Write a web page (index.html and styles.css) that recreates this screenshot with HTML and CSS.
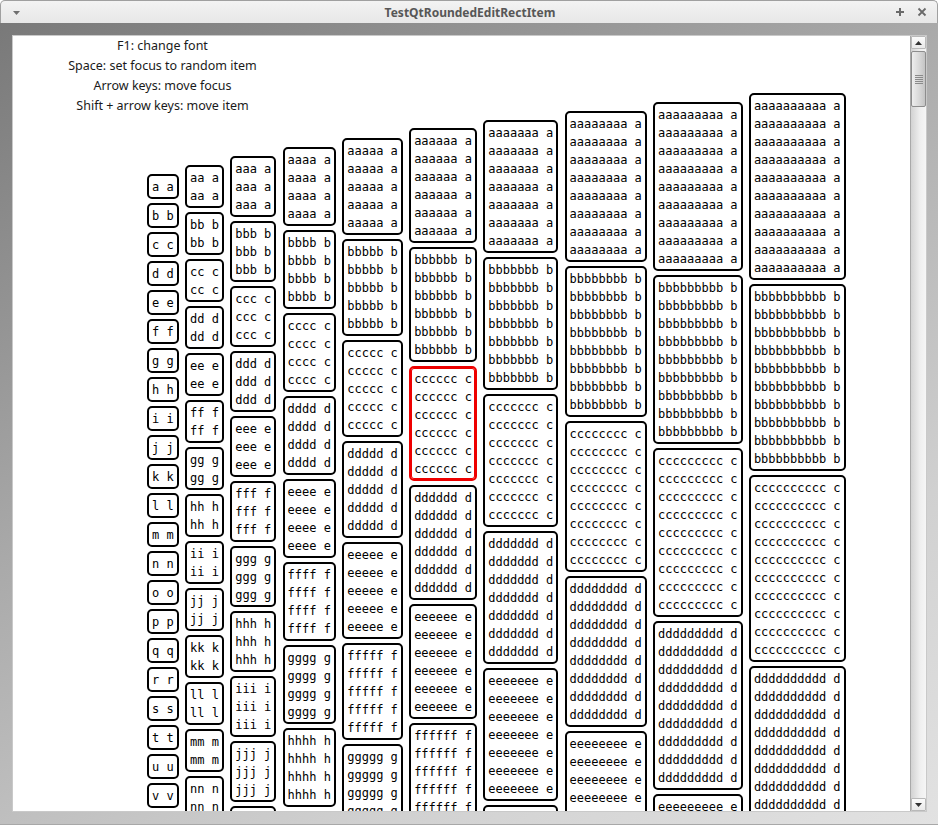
FILE: index.html
```html
<!DOCTYPE html>
<html>
<head>
<meta charset="utf-8">
<link rel="stylesheet" href="styles.css">
</head>
<body>
<div class="window">
  <div class="titlebar">
    <div class="tb-left"><svg width="7" height="4" viewBox="0 0 7 4"><polygon points="0,0 7,0 3.5,4" fill="#6f6f6f"/></svg></div>
    <div class="title">TestQtRoundedEditRectItem</div>
    <div class="tb-right">
      <svg width="10" height="10" viewBox="0 0 10 10"><path d="M5 1v8M1 5h8" stroke="#6a6a6a" stroke-width="2"/></svg>
      <svg width="10" height="10" viewBox="0 0 10 10"><path d="M1.5 1.5l7 7M8.5 1.5l-7 7" stroke="#6a6a6a" stroke-width="1.8"/></svg>
    </div>
  </div>
  <div class="frame">
    <div class="view">
      <div class="canvas">
        <div class="help">F1: change font<br>Space: set focus to random item<br>Arrow keys: move focus<br>Shift + arrow keys: move item</div>
        <div class="cols">
          <div class="col c1">
<div class="box">a a</div>
<div class="box">b b</div>
<div class="box">c c</div>
<div class="box">d d</div>
<div class="box">e e</div>
<div class="box">f f</div>
<div class="box">g g</div>
<div class="box">h h</div>
<div class="box">i i</div>
<div class="box">j j</div>
<div class="box">k k</div>
<div class="box">l l</div>
<div class="box">m m</div>
<div class="box">n n</div>
<div class="box">o o</div>
<div class="box">p p</div>
<div class="box">q q</div>
<div class="box">r r</div>
<div class="box">s s</div>
<div class="box">t t</div>
<div class="box">u u</div>
<div class="box">v v</div>
          </div>
          <div class="col c2">
<div class="box">aa a
aa a</div>
<div class="box">bb b
bb b</div>
<div class="box">cc c
cc c</div>
<div class="box">dd d
dd d</div>
<div class="box">ee e
ee e</div>
<div class="box">ff f
ff f</div>
<div class="box">gg g
gg g</div>
<div class="box">hh h
hh h</div>
<div class="box">ii i
ii i</div>
<div class="box">jj j
jj j</div>
<div class="box">kk k
kk k</div>
<div class="box">ll l
ll l</div>
<div class="box">mm m
mm m</div>
<div class="box">nn n
nn n</div>
          </div>
          <div class="col c3">
<div class="box">aaa a
aaa a
aaa a</div>
<div class="box">bbb b
bbb b
bbb b</div>
<div class="box">ccc c
ccc c
ccc c</div>
<div class="box">ddd d
ddd d
ddd d</div>
<div class="box">eee e
eee e
eee e</div>
<div class="box">fff f
fff f
fff f</div>
<div class="box">ggg g
ggg g
ggg g</div>
<div class="box">hhh h
hhh h
hhh h</div>
<div class="box">iii i
iii i
iii i</div>
<div class="box">jjj j
jjj j
jjj j</div>
<div class="box">kkk k
kkk k
kkk k</div>
          </div>
          <div class="col c4">
<div class="box">aaaa a
aaaa a
aaaa a
aaaa a</div>
<div class="box">bbbb b
bbbb b
bbbb b
bbbb b</div>
<div class="box">cccc c
cccc c
cccc c
cccc c</div>
<div class="box">dddd d
dddd d
dddd d
dddd d</div>
<div class="box">eeee e
eeee e
eeee e
eeee e</div>
<div class="box">ffff f
ffff f
ffff f
ffff f</div>
<div class="box">gggg g
gggg g
gggg g
gggg g</div>
<div class="box">hhhh h
hhhh h
hhhh h
hhhh h</div>
<div class="box">iiii i
iiii i
iiii i
iiii i</div>
          </div>
          <div class="col c5">
<div class="box">aaaaa a
aaaaa a
aaaaa a
aaaaa a
aaaaa a</div>
<div class="box">bbbbb b
bbbbb b
bbbbb b
bbbbb b
bbbbb b</div>
<div class="box">ccccc c
ccccc c
ccccc c
ccccc c
ccccc c</div>
<div class="box">ddddd d
ddddd d
ddddd d
ddddd d
ddddd d</div>
<div class="box">eeeee e
eeeee e
eeeee e
eeeee e
eeeee e</div>
<div class="box">fffff f
fffff f
fffff f
fffff f
fffff f</div>
<div class="box">ggggg g
ggggg g
ggggg g
ggggg g
ggggg g</div>
          </div>
          <div class="col c6">
<div class="box">aaaaaa a
aaaaaa a
aaaaaa a
aaaaaa a
aaaaaa a
aaaaaa a</div>
<div class="box">bbbbbb b
bbbbbb b
bbbbbb b
bbbbbb b
bbbbbb b
bbbbbb b</div>
<div class="box focus">cccccc c
cccccc c
cccccc c
cccccc c
cccccc c
cccccc c</div>
<div class="box">dddddd d
dddddd d
dddddd d
dddddd d
dddddd d
dddddd d</div>
<div class="box">eeeeee e
eeeeee e
eeeeee e
eeeeee e
eeeeee e
eeeeee e</div>
<div class="box">ffffff f
ffffff f
ffffff f
ffffff f
ffffff f
ffffff f</div>
          </div>
          <div class="col c7">
<div class="box">aaaaaaa a
aaaaaaa a
aaaaaaa a
aaaaaaa a
aaaaaaa a
aaaaaaa a
aaaaaaa a</div>
<div class="box">bbbbbbb b
bbbbbbb b
bbbbbbb b
bbbbbbb b
bbbbbbb b
bbbbbbb b
bbbbbbb b</div>
<div class="box">ccccccc c
ccccccc c
ccccccc c
ccccccc c
ccccccc c
ccccccc c
ccccccc c</div>
<div class="box">ddddddd d
ddddddd d
ddddddd d
ddddddd d
ddddddd d
ddddddd d
ddddddd d</div>
<div class="box">eeeeeee e
eeeeeee e
eeeeeee e
eeeeeee e
eeeeeee e
eeeeeee e
eeeeeee e</div>
<div class="box">fffffff f
fffffff f
fffffff f
fffffff f
fffffff f
fffffff f
fffffff f</div>
          </div>
          <div class="col c8">
<div class="box">aaaaaaaa a
aaaaaaaa a
aaaaaaaa a
aaaaaaaa a
aaaaaaaa a
aaaaaaaa a
aaaaaaaa a
aaaaaaaa a</div>
<div class="box">bbbbbbbb b
bbbbbbbb b
bbbbbbbb b
bbbbbbbb b
bbbbbbbb b
bbbbbbbb b
bbbbbbbb b
bbbbbbbb b</div>
<div class="box">cccccccc c
cccccccc c
cccccccc c
cccccccc c
cccccccc c
cccccccc c
cccccccc c
cccccccc c</div>
<div class="box">dddddddd d
dddddddd d
dddddddd d
dddddddd d
dddddddd d
dddddddd d
dddddddd d
dddddddd d</div>
<div class="box">eeeeeeee e
eeeeeeee e
eeeeeeee e
eeeeeeee e
eeeeeeee e
eeeeeeee e
eeeeeeee e
eeeeeeee e</div>
          </div>
          <div class="col c9">
<div class="box">aaaaaaaaa a
aaaaaaaaa a
aaaaaaaaa a
aaaaaaaaa a
aaaaaaaaa a
aaaaaaaaa a
aaaaaaaaa a
aaaaaaaaa a
aaaaaaaaa a</div>
<div class="box">bbbbbbbbb b
bbbbbbbbb b
bbbbbbbbb b
bbbbbbbbb b
bbbbbbbbb b
bbbbbbbbb b
bbbbbbbbb b
bbbbbbbbb b
bbbbbbbbb b</div>
<div class="box">ccccccccc c
ccccccccc c
ccccccccc c
ccccccccc c
ccccccccc c
ccccccccc c
ccccccccc c
ccccccccc c
ccccccccc c</div>
<div class="box">ddddddddd d
ddddddddd d
ddddddddd d
ddddddddd d
ddddddddd d
ddddddddd d
ddddddddd d
ddddddddd d
ddddddddd d</div>
<div class="box">eeeeeeeee e
eeeeeeeee e
eeeeeeeee e
eeeeeeeee e
eeeeeeeee e
eeeeeeeee e
eeeeeeeee e
eeeeeeeee e
eeeeeeeee e</div>
          </div>
          <div class="col c10">
<div class="box">aaaaaaaaaa a
aaaaaaaaaa a
aaaaaaaaaa a
aaaaaaaaaa a
aaaaaaaaaa a
aaaaaaaaaa a
aaaaaaaaaa a
aaaaaaaaaa a
aaaaaaaaaa a
aaaaaaaaaa a</div>
<div class="box">bbbbbbbbbb b
bbbbbbbbbb b
bbbbbbbbbb b
bbbbbbbbbb b
bbbbbbbbbb b
bbbbbbbbbb b
bbbbbbbbbb b
bbbbbbbbbb b
bbbbbbbbbb b
bbbbbbbbbb b</div>
<div class="box">cccccccccc c
cccccccccc c
cccccccccc c
cccccccccc c
cccccccccc c
cccccccccc c
cccccccccc c
cccccccccc c
cccccccccc c
cccccccccc c</div>
<div class="box">dddddddddd d
dddddddddd d
dddddddddd d
dddddddddd d
dddddddddd d
dddddddddd d
dddddddddd d
dddddddddd d
dddddddddd d
dddddddddd d</div>
          </div>
        </div>
      </div>
      <div class="scrollbar">
        <div class="sb-btn"><svg width="7" height="4" viewBox="0 0 7 4"><polygon points="3.5,0 7,4 0,4" fill="#333"/></svg></div>
        <div class="sb-handle">
          <div class="grip"></div><div class="grip"></div><div class="grip"></div><div class="grip"></div><div class="grip"></div>
        </div>
        <div class="sb-track"></div>
        <div class="sb-btn"><svg width="7" height="4" viewBox="0 0 7 4"><polygon points="0,0 7,0 3.5,4" fill="#333"/></svg></div>
      </div>
    </div>
  </div>
</div>
</body>
</html>
```
FILE: styles.css
```css
* { box-sizing: border-box; }
html, body { margin: 0; padding: 0; }
body {
  width: 938px;
  height: 825px;
  overflow: hidden;
  background: #ffffff;
  font-family: "Noto Sans", "DejaVu Sans", sans-serif;
}
.window {
  height: 825px;
  display: flex;
  flex-direction: column;
  overflow: hidden;
}
.titlebar {
  height: 23px;
  flex: none;
  display: grid;
  grid-template-columns: 1fr auto 1fr;
  align-items: center;
  padding: 0 10px 0 12px;
  background: linear-gradient(#f3f3f3, #e7e7e7);
  border: 1px solid #a0a0a0;
  border-bottom: none;
  border-radius: 5px 5px 0 0;
}
.tb-left { display: flex; align-items: center; }
.tb-left svg { margin-top: 1px; }
.title {
  font-weight: bold;
  font-size: 12px;
  color: #575757;
}
.tb-right {
  display: flex;
  justify-content: flex-end;
  align-items: center;
  gap: 12px;
}
.frame {
  flex: 1;
  min-height: 0;
  display: flex;
  padding: 12px 11px 12px 12px;
  background: linear-gradient(150deg, #797979 0%, #a9a9a9 40%, #d0d0d0 75%, #e2e2e2 100%);
  border-bottom: 1px solid #a8a8a8;
}
.view {
  flex: 1;
  min-height: 0;
  display: flex;
  border: 1px solid #c9c9c9;
  overflow: hidden;
}
.canvas {
  flex: 1;
  min-height: 0;
  background: #ffffff;
  overflow: hidden;
  display: grid;
  align-content: start;
  justify-content: start;
}
.help {
  grid-area: 1 / 1;
  width: 299px;
  margin-top: 0;
  text-align: center;
  font-size: 12.5px;
  line-height: 20px;
  color: #1a1a1a;
}
.cols {
  grid-area: 1 / 1;
  display: flex;
  align-items: flex-start;
  gap: 6.3px;
  padding-left: 134px;
}
.col {
  display: flex;
  flex-direction: column;
  gap: 4px;
}
.c1 { margin-top: 138px; }
.c2 { margin-top: 129px; }
.c3 { margin-top: 120px; }
.c4 { margin-top: 111px; }
.c5 { margin-top: 102px; }
.c6 { margin-top: 92px; }
.c7 { margin-top: 84px; }
.c8 { margin-top: 75px; }
.c9 { margin-top: 66px; }
.c10 { margin-top: 57px; }
.box {
  border: 2px solid #000000;
  border-radius: 5px;
  padding: 2px 3px 1px 3px;
  font-family: "DejaVu Sans Mono", monospace;
  font-size: 12px;
  line-height: 18px;
  white-space: pre;
  color: #000000;
  background: #ffffff;
}
.box.focus {
  border-color: #ee0000;
  box-shadow: inset 0 0 0 1px #ee0000;
}
.scrollbar {
  width: 16px;
  flex: none;
  display: flex;
  flex-direction: column;
  border-left: 1px solid #a9a9a9;
  background: linear-gradient(to right, #d2d2d2, #efefef 60%, #f6f6f6);
}
.sb-btn {
  height: 13px;
  flex: none;
  display: flex;
  align-items: center;
  justify-content: center;
  background: linear-gradient(#fbfbfb, #e9e9e9);
  border: 1px solid #b9b9b9;
  border-radius: 1px;
}
.sb-handle {
  height: 56px;
  margin-top: 2px;
  flex: none;
  display: flex;
  flex-direction: column;
  align-items: center;
  justify-content: center;
  gap: 1px;
  border: 1px solid #8d8d8d;
  border-radius: 2px;
  background: linear-gradient(to right, #eeeeee, #d6d6d6 60%, #c4c4c4);
}
.grip {
  width: 8px;
  height: 1px;
  background: #8a8a8a;
}
.sb-track { flex: 1; }
```
